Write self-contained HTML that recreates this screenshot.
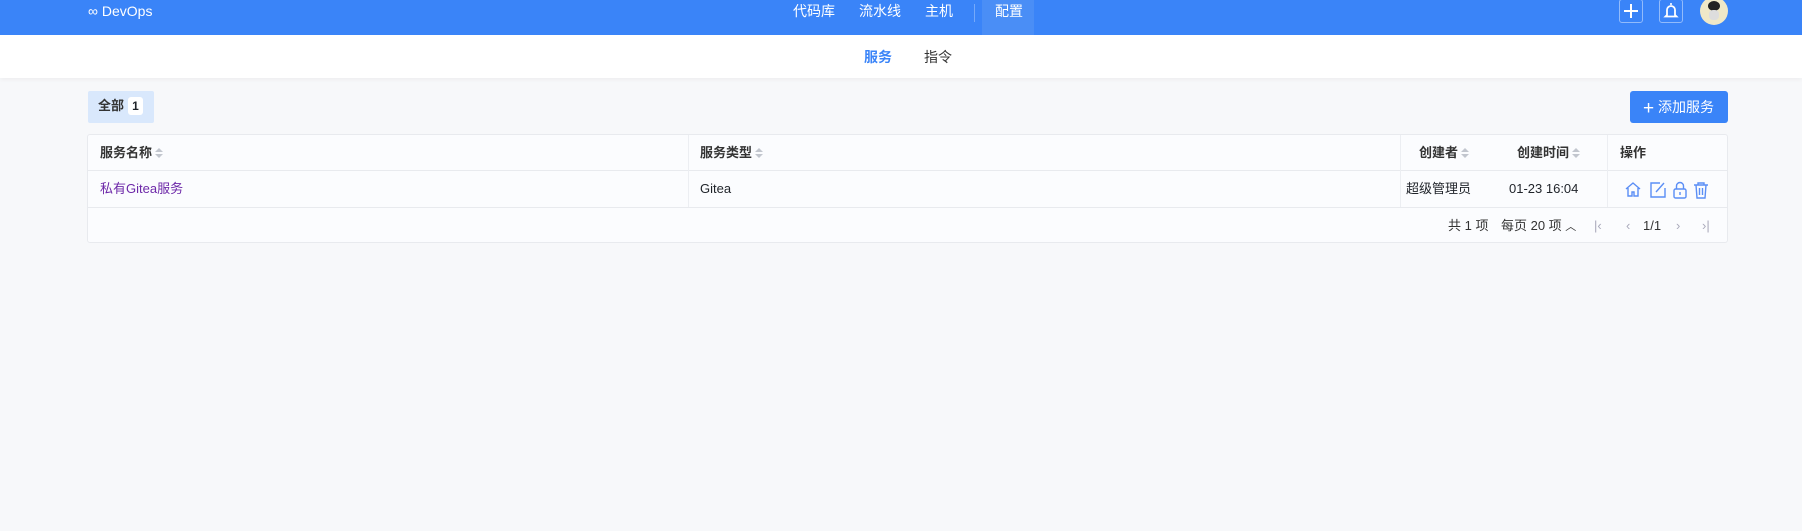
<!DOCTYPE html>
<html><head><meta charset="utf-8"><style>
*{box-sizing:border-box;margin:0;padding:0}
body{width:1802px;height:531px;background:#f7f8fa;font-family:"Liberation Sans","Noto Sans CJK SC",sans-serif;color:#1f2329;position:relative;overflow:hidden;font-size:13px}
.a{position:absolute;white-space:nowrap;line-height:16px}
.hdr{position:absolute;left:0;top:0;width:1802px;height:35px;background:#3a84f8}
.sub{position:absolute;left:0;top:35px;width:1802px;height:43px;background:#fff;box-shadow:0 2px 4px rgba(0,0,0,.04)}
.w{color:#fff;font-size:14px}
.ib{position:absolute;top:-1px;width:24px;height:24px;border:1px solid rgba(255,255,255,.45);border-radius:3px}
.tbl{position:absolute;left:87px;top:134px;width:1641px;height:109px;background:#fbfcfe;border:1px solid #e8eaee;border-radius:3px}
.hl{position:absolute;left:0;width:1639px;height:1px;background:#e8eaee}
.vl{position:absolute;top:0;width:1px;height:72px;background:#eceef2}
.th{font-weight:bold;font-size:13px;color:#333}
.s{display:inline-block;vertical-align:middle;margin-left:3px;width:8px;height:11px;position:relative}
.s:before{content:"";position:absolute;left:0;top:0;border:4px solid transparent;border-bottom:4px solid #c2c6ce;border-top:0}
.s:after{content:"";position:absolute;left:0;top:6px;border:4px solid transparent;border-top:4px solid #c2c6ce;border-bottom:0}
.pg{color:#aab;font-size:13px}
</style></head><body>
<div class="hdr"></div>
<div class="a" style="left:982px;top:0;width:52px;height:35px;background:#4a8ef6"></div>
<div class="a" style="left:974px;top:4px;width:1px;height:18px;background:rgba(255,255,255,.3)"></div>
<div class="a w" style="left:88px;top:3px;font-size:14px">∞ DevOps</div>
<div class="a w" style="left:793px;top:3px">代码库</div>
<div class="a w" style="left:859px;top:3px">流水线</div>
<div class="a w" style="left:925px;top:3px">主机</div>
<div class="a w" style="left:995px;top:3px">配置</div>
<div class="ib" style="left:1619px"><svg width="22" height="22" viewBox="0 0 22 22"><path d="M11 4v14M4 11h14" stroke="#fff" stroke-width="2"/></svg></div>
<div class="ib" style="left:1659px"><svg width="22" height="22" viewBox="0 0 22 22"><path d="M7 15V10a4 4 0 0 1 8 0v5l1.5 1.5h-11z" fill="none" stroke="#fff" stroke-width="1.8"/><path d="M11 3v2" stroke="#fff" stroke-width="1.6"/></svg></div>
<div class="a" style="left:1700px;top:-3px;width:28px;height:28px;border-radius:50%;background:#efe8c8;overflow:hidden"><div style="position:absolute;left:8px;top:4px;width:12px;height:10px;border-radius:50%;background:#222"></div><div style="position:absolute;left:9px;top:13px;width:10px;height:10px;border-radius:40%;background:#ddd"></div></div>
<div class="sub"></div>
<div class="a" style="left:864px;top:49px;font-size:14px;color:#3a84f8;font-weight:bold">服务</div>
<div class="a" style="left:924px;top:49px;font-size:14px;color:#333">指令</div>
<div class="a" style="left:88px;top:91px;width:66px;height:32px;background:#d9e8fc;border-radius:2px"></div>
<div class="a th" style="left:98px;top:98px">全部</div>
<div class="a" style="left:128px;top:97px;width:15px;height:18px;background:#fff;border-radius:3px;font-weight:bold;font-size:12px;text-align:center;line-height:18px">1</div>
<div class="a" style="left:1630px;top:91px;width:98px;height:32px;background:#3a84f8;border-radius:3px;color:#fff;font-size:14px;line-height:32px;padding-left:13px"><span style="font-size:19px;vertical-align:-2px">+</span> 添加服务</div>
<div class="tbl">
<div class="hl" style="top:35px"></div><div class="hl" style="top:72px"></div>
<div class="vl" style="left:600px"></div><div class="vl" style="left:1312px"></div><div class="vl" style="left:1519px"></div>
<div class="a th" style="left:12px;top:10px">服务名称<span class="s"></span></div>
<div class="a th" style="left:612px;top:10px">服务类型<span class="s"></span></div>
<div class="a th" style="left:1331px;top:10px">创建者<span class="s"></span></div>
<div class="a th" style="left:1429px;top:10px">创建时间<span class="s"></span></div>
<div class="a th" style="left:1532px;top:10px">操作</div>
<div class="a" style="left:12px;top:46px;color:#6d28a8">私有Gitea服务</div>
<div class="a" style="left:612px;top:46px">Gitea</div>
<div class="a" style="left:1318px;top:46px">超级管理员</div>
<div class="a" style="left:1421px;top:46px">01-23 16:04</div>
<svg class="a" style="left:1536px;top:45px" width="88" height="20" viewBox="0 0 88 20" fill="none" stroke="#5b8ef5" stroke-width="1.4">
<path d="M2 9L9 3l7 6M4 8v8h4v-4h2v4h4V8"/>
<path d="M36 3h-9v14h14V8M32 12l8-9"/>
<rect x="50" y="9" width="12" height="9" rx="1.5"/><path d="M52.5 9V6a3.5 3.5 0 0 1 7 0v3M56 12v3"/>
<path d="M70 5h14M74 5V3h6v2M72 5l1 13h8l1-13M75.5 8v7M78.5 8v7"/>
</svg>
<div class="a" style="left:1360px;top:83px;color:#333">共 1 项</div>
<div class="a" style="left:1413px;top:83px;color:#333">每页 20 项 <span style="font-size:11px">︿</span></div>
<div class="a pg" style="left:1506px;top:83px">|‹</div>
<div class="a pg" style="left:1538px;top:83px">‹</div>
<div class="a" style="left:1555px;top:83px;color:#333">1/1</div>
<div class="a pg" style="left:1588px;top:83px">›</div>
<div class="a pg" style="left:1614px;top:83px">›|</div>
</div>
</body></html>
